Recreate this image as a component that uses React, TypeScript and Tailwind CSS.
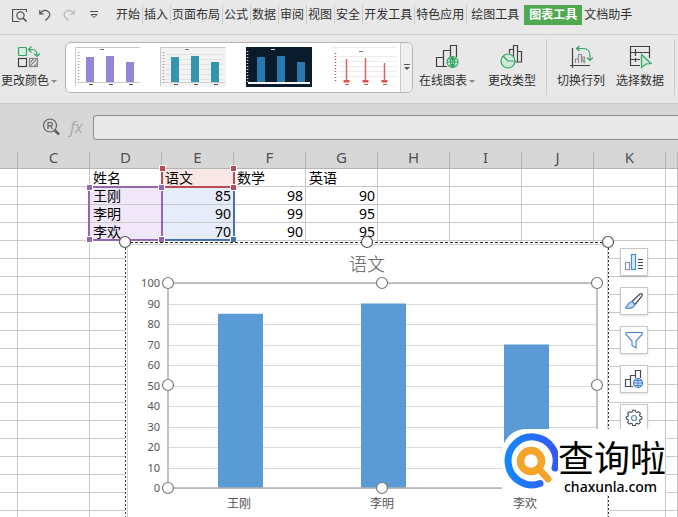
import React, { useState } from "react";

const tabs = ["开始", "插入", "页面布局", "公式", "数据", "审阅", "视图", "安全", "开发工具", "特色应用"];

const columns = ["C", "D", "E", "F", "G", "H", "I", "J", "K"];

const rows = [
    ["", "姓名", "语文", "数学", "英语"],
    ["", "王刚", "85", "98", "90"],
    ["", "李明", "90", "99", "95"],
    ["", "李欢", "70", "90", "95"],
];

const scores = [
    { name: "王刚", value: 85 },
    { name: "李明", value: 90 },
    { name: "李欢", value: 70 },
];

function PreviewIcon() {
    return (
        <svg className="w-[15px] h-[15px]" viewBox="0 0 15 15" fill="none" stroke="#505050" strokeWidth="1.2">
            <path d="M14.500 4V1.500H.5v12h7" />
            <circle cx="8.5" cy="7.5" r="3.6" />
            <path d="M11 10l3.5 3.5" strokeWidth="1.6" />
        </svg>
    );
}

function UndoIcon({ flip }: { flip?: boolean }) {
    return (
        <svg className={flip ? "w-3 h-3 -scale-x-100" : "w-3 h-3"} viewBox="0 0 12 12" fill="none" stroke={flip ? "#b8b8b8" : "#505050"} strokeWidth="1.2">
            <path d="M.8 1v4h4M1 5c2-3.2 5-4.2 7.8-2.8 2.6 1.5 2.6 4.6.7 6.3L6.5 11.5" />
        </svg>
    );
}

function Thumb({ bar, bg, label, dark }: { bar: string; bg: string; label: string; dark?: boolean }) {
    return (
        <svg className="w-[66px] h-10" viewBox="0 0 66 40" role="img" aria-label={label}>
            <rect width="66" height="40" fill={bg} />
            {!dark && <path d="M.5 39V.5h65" fill="none" stroke="#c8c8c8" />}
            {!dark && bg !== "#fff" && <path d="M5 7.5h58M5 12.5h58M5 17.5h58M5 22.5h58M5 27.5h58M5 32.5h58" stroke="#e2e2e2" />}
            <path d="M25 2.500h4" stroke={dark ? "#ddd" : "#777"} />
            <path d={dark ? "M1.5 4v32" : "M3.5 5v31"} stroke={dark ? "#ddd" : "#999"} strokeWidth="1.5" strokeDasharray="1 2" />
            <path d="M11 10h8V35h-8zM31 9h8V35h-8zM51 15h8V35h-8z" fill={bar} />
            <path d={dark ? "M2 36h62" : "M5 35.500h60"} stroke={dark ? "#f5f5f5" : "#ccc"} strokeWidth={dark ? 2 : 1} />
            {!dark && <path d="M14 37.500h4M34 37.500h4M54 37.500h4" stroke="#555" />}
        </svg>
    );
}

function LineThumb() {
    return (
        <svg className="w-[66px] h-10" viewBox="0 0 66 40" role="img" aria-label="样式 4">
            <path d="M0 .5h66M8 9.500h58M8 14.500h58M8 19.500h58M8 24.500h58M8 29.500h58" stroke="#ececec" />
            <path d="M28 4.500h4" stroke="#777" />
            <path d="M4.500 6v30" stroke="#a55" strokeWidth="1.500" strokeDasharray="1 2" />
            <path d="M15.500 12v22M34.500 11v23M53.500 16v18" stroke="#d9635f" strokeWidth="1.500" />
            <path d="M12.500 33h6v2.500h-6zM31.500 33h6v2.500h-6zM50.500 33h6v2.500h-6z" fill="#d9534f" />
            <path d="M14 37.500h4M33 37.500h4M52 37.500h4" stroke="#a66" />
        </svg>
    );
}

function RibbonButton({ label, arrow, children }: { label: string; arrow?: boolean; children: React.ReactNode }) {
    return (
        <button type="button" className="flex flex-col items-center gap-1 shrink-0">
            <svg className="w-6 h-6" viewBox="0 0 24 24" fill="none" stroke="#404040" strokeWidth="1.2">
                {children}
            </svg>
            <span className="flex items-center gap-0.5 text-xs leading-4">
                {label}
                {arrow && <span className="border-x-[3px] border-t-[3px] border-x-transparent border-t-[#888]" />}
            </span>
        </button>
    );
}

function Handle({ className }: { className: string }) {
    return <span className={"absolute w-[5px] h-[5px] outline outline-white " + className} />;
}

function ScoreChart() {
    const left = 43;
    const top = 41;
    const bottom = 246;
    const right = 472;
    const ticks = [0, 10, 20, 30, 40, 50, 60, 70, 80, 90, 100];
    const yOf = (v: number) => bottom - (v * (bottom - top)) / 100;
    const handles = [
        [left, top], [257, top], [right, top],
        [left, 143], [right, 143],
        [left, bottom], [257, bottom],
    ];

    return (
        <svg className="block w-[484px] h-[300px] overflow-visible" viewBox="0 0 484 300" role="img" aria-label="语文">
            <rect width="484" height="300" fill="#fff" />
            <path d="M2.500 300V2.500h480V300" fill="none" stroke="#cfcfcf" />
            <path d="M.5 300V0M483.500 300V0" stroke="#333" strokeDasharray="2 2" />
            <path d="M0 .5h484" stroke="#222" strokeDasharray="3 2" />
            <text x="242" y="29" textAnchor="middle" fontSize="18" fontWeight="300" fill="#595959">语文</text>
            {ticks.map((t) => (
                <g key={t}>
                    <path d={`M${left} ${Math.round(yOf(t)) + 0.5}H${right}`} stroke="#d9d9d9" />
                    <text x="35" y={Math.round(yOf(t)) + 4} textAnchor="end" fontSize="11" fill="#555">{t}</text>
                </g>
            ))}
            {scores.map((s, i) => (
                <g key={s.name}>
                    <rect x={93 + i * 143} y={yOf(s.value)} width="45" height={bottom - yOf(s.value)} fill="#5b9bd5" />
                    <text x={114 + i * 143} y="266" textAnchor="middle" fontSize="12" fill="#555">{s.name}</text>
                </g>
            ))}
            <rect x={left} y={top} width={right - left} height={bottom - top} fill="none" stroke="#b0b0b0" strokeWidth="1.500" />
            {handles.map(([x, y]) => (
                <circle key={`${x}-${y}`} cx={x} cy={y} r="5.500" fill="#fff" stroke="#7a7a7a" strokeWidth="1.200" />
            ))}
            {[0, 242, 483].map((x) => (
                <circle key={x} cx={x} cy="0" r="5.500" fill="#fff" stroke="#555" strokeWidth="1.200" />
            ))}
        </svg>
    );
}

function SideButton({ label, children }: { label: string; children: React.ReactNode }) {
    return (
        <button type="button" aria-label={label} className="flex items-center justify-center w-7 h-7 bg-white border border-[#c8c8c8] shadow">
            <svg className="w-5 h-5" viewBox="0 0 20 20" fill="none" stroke="#404a58" strokeWidth="1.2">
                {children}
            </svg>
        </button>
    );
}

function Watermark() {
    return (
        <div className="absolute left-[502px] top-[289px] flex w-[163px] h-[66px] bg-white rounded-tl-3xl">
            <svg className="w-14 h-[66px] shrink-0" viewBox="0 0 56 66" fill="none" strokeLinecap="round">
                <path d="M38 54.500A24 24 0 1 1 53 39" stroke="url(#ring)" strokeWidth="7" />
                <path d="M37 40l9 10" stroke="#f5a42a" strokeWidth="7" />
                <circle cx="29" cy="32" r="10.500" stroke="#f5a42a" strokeWidth="7.500" fill="#fff" />
                <defs>
                    <linearGradient id="ring" x1="0" x2="1">
                        <stop stopColor="#1486fb" />
                        <stop offset="1" stopColor="#3458f6" />
                    </linearGradient>
                </defs>
            </svg>
            <div className="flex flex-col text-black whitespace-nowrap pt-2.5">
                <span className="text-[36px] leading-10">查询啦</span>
                <span className="pl-1.5 text-sm leading-4 font-medium">chaxunla.com</span>
            </div>
        </div>
    );
}

function App() {
    const [formula, setFormula] = useState("");

    return (
        <div className="flex flex-col h-screen overflow-hidden bg-[#d7d7d7] text-[#303030] font-['Noto_Sans','Noto_Sans_CJK_SC',sans-serif]">
            <header className="flex items-center h-[35px] shrink-0 pl-3 pb-1 bg-[#e8e8e8] border-b border-[#d0d0d0]">
                <div className="flex items-center gap-3 pr-3">
                    <button type="button" aria-label="打印预览"><PreviewIcon /></button>
                    <button type="button" aria-label="撤销"><UndoIcon /></button>
                    <button type="button" aria-label="恢复"><UndoIcon flip /></button>
                    <button type="button" aria-label="更多">
                        <svg className="w-[14px] h-3" viewBox="0 0 14 12" fill="none" stroke="#505050">
                            <path d="M3 2.500h8M4 5.500l3 3 3-3z" />
                        </svg>
                    </button>
                </div>
                <nav className="flex items-center text-xs leading-5 whitespace-nowrap">
                    {tabs.map((tab, i) => (
                        <button type="button" key={tab} className={i === 0 ? "pl-[3px] pr-0.5" : "pl-px pr-0.5 border-l border-[#cccccc]"}>
                            {tab}
                        </button>
                    ))}
                    <button type="button" className="pl-1 pr-[5px] border-l border-[#cccccc]">绘图工具</button>
                    <button type="button" className="px-[5px] bg-[#50a850] text-white font-bold">图表工具</button>
                    <button type="button" className="px-0.5">文档助手</button>
                </nav>
            </header>

            <section className="flex items-center h-[69px] shrink-0 pl-px pb-1 bg-[#e8e8e8] border-b border-[#cacaca]">
                <RibbonButton label="更改颜色" arrow>
                    <rect x="1.500" y="2.500" width="8" height="8" rx="1" stroke="#35a566" fill="#d8eee0" />
                    <rect x="1.500" y="13.500" width="8" height="8" />
                    <rect x="12.500" y="13.500" width="8" height="8" stroke="#888" />
                    <path d="M12.500 18l4.500-4.500M12.500 21.500l8-8M17 21.500l3.500-3.500" stroke="#888" />
                    <path d="M14.500 1.500l-3 3 3 3M11.500 4.500h4c3 0 4.500 2 4.500 6M17 8.500l3 3 3-3" stroke="#35a566" />
                </RibbonButton>

                <div className="flex h-[51px] w-[348px] shrink-0 mx-2 mr-1.5 bg-white border border-[#b4b4b4] rounded-md overflow-hidden">
                    <div className="flex flex-1 items-center justify-between pl-[9px] pr-[3px]">
                        <button type="button"><Thumb bar="#9585d8" bg="#fff" label="样式 1" /></button>
                        <button type="button"><Thumb bar="#3595ae" bg="#f3f3f3" label="样式 2" /></button>
                        <button type="button"><Thumb bar="#2878ae" bg="#0a1c2c" label="样式 3" dark /></button>
                        <button type="button"><LineThumb /></button>
                    </div>
                    <button type="button" aria-label="更多样式" className="flex items-center justify-center w-3 bg-[#f0f0f0] border-l border-[#cccccc]">
                        <svg className="w-2 h-2" viewBox="0 0 8 8">
                            <path d="M1 1.500h6" stroke="#555" />
                            <path d="M1 4h6L4 7z" fill="#555" />
                        </svg>
                    </button>
                </div>

                <RibbonButton label="在线图表" arrow>
                    <path d="M12 21.500H1.500v-9h7M8.500 21.500v-16h7M15.500 12V.5h6V12" />
                    <circle cx="17.500" cy="17" r="5.500" fill="#d8eee0" stroke="#35a566" />
                    <path d="M12 17h11M17.500 11.500v11M13.500 13.500c2 1.500 6 1.500 8 0M13.500 20.500c2-1.500 6-1.500 8 0M17.500 11.500c-3 3-3 8 0 11M17.500 11.500c3 3 3 8 0 11" stroke="#35a566" />
                </RibbonButton>
                <div className="w-[13px] shrink-0" />
                <RibbonButton label="更改类型">
                    <path d="M9.500 8.500v-4h4V17M13.500 17V.5h4V17M17.500 6.500h4V17h-6" />
                    <circle cx="8" cy="16" r="7" fill="#cfe9da" stroke="#35a566" />
                    <path d="M8 16l-5-5M8 16h7" stroke="#35a566" />
                </RibbonButton>
                <div className="w-px h-14 shrink-0 mx-2.5 bg-[#cccccc]" />
                <RibbonButton label="切换行列">
                    <path d="M3.500 3v20M1 20.500h20" />
                    <path d="M6.500 18v-4h3v4M9.500 18V9.500h3V18M12.500 12h3v6z" stroke="#909090" />
                    <path d="M10.500 1l-3 2.500 3 2.500M8 3.500h6c4.500 0 7 3 7 7V15M18 12.500l3 3 3-3" stroke="#35a566" />
                </RibbonButton>
                <div className="w-[11px] shrink-0" />
                <RibbonButton label="选择数据">
                    <path d="M12 20.500H2.500v-19h19V13M2.500 7.500h19M2.500 14.500H12M7.500 4v7M7.500 13v4" />
                    <path d="M13.500 9.500l9.500 9-5 .5-4.500 3.500z" fill="#cfe9da" stroke="#35a566" />
                </RibbonButton>
                <div className="w-px h-14 shrink-0 ml-2.5 bg-[#cccccc]" />
            </section>

            <div className="flex items-center h-9 shrink-0 pl-[42px] pt-2.5">
                <button type="button" aria-label="查找">
                    <svg className="w-[18px] h-[18px]" viewBox="0 0 18 18" fill="none" stroke="#606060" strokeWidth="1.200">
                        <circle cx="8" cy="7.500" r="6.500" />
                        <path d="M6 11V4.500h2.500c2.500 0 2.500 3.300 0 3.300H6M8.500 8l2 3" />
                        <path d="M12.500 12l4.500 4.500" strokeWidth="2.500" />
                    </svg>
                </button>
                <label htmlFor="formula" className="w-[33px] pl-2.5 text-base leading-6 italic text-[#aaaaaa] font-['Open_Sans',sans-serif]">fx</label>
                <input
                    id="formula"
                    type="text"
                    value={formula}
                    onChange={(e) => setFormula(e.target.value)}
                    className="flex-1 min-w-0 h-[25px] px-2 text-sm bg-[#e8e8e8] border border-r-0 border-[#8c8c8c] rounded-l"
                />
            </div>

            <main className="relative flex-1 min-h-0 overflow-hidden bg-white">
                <table className="table-fixed w-full border-separate border-spacing-0">
                    <colgroup>
                        <col className="w-[18px]" />
                        {columns.map((c) => <col key={c} className="w-[72px]" />)}
                        <col />
                    </colgroup>
                    <thead className="bg-[#d7d7d7]">
                        <tr>
                            {["", ...columns, " "].map((c) => (
                                <th key={c} scope="col" className="h-[29px] p-0 pt-3 border-b border-[#b4b4b4] text-[15px] leading-4 font-normal text-[#505050]">
                                    <div className="h-4 border-r border-[#b4b4b4] flex items-center justify-center pb-1.5">{c}</div>
                                </th>
                            ))}
                        </tr>
                    </thead>
                    <tbody>
                        {Array.from({ length: 40 }, (_, r) => (
                            <tr key={r}>
                                {["", ...columns, " "].map((c, i) => {
                                    const text = rows[r]?.[i - 1] ?? "";
                                    const number = /^\d+$/.test(text);
                                    let fill = "";
                                    if (c === "E" && r === 0) fill = "bg-[#f9e7e6]";
                                    if (c === "D" && r > 0 && r < 4) fill = "bg-[#f0e7f8]";
                                    if (c === "E" && r > 0 && r < 4) fill = "bg-[#e6ecf9]";
                                    return (
                                        <td key={c} className={"h-[18px] py-0 pl-[3px] pr-0.5 border-r border-b border-[#c9c9c9] text-sm leading-[17px] text-black " + (number ? "text-right " : "") + fill}>
                                            {text}
                                        </td>
                                    );
                                })}
                            </tr>
                        ))}
                    </tbody>
                </table>

                <div className="absolute left-[161px] top-[29px] w-[74px] h-[19px] border-2 border-t-0 border-[#b94a56]">
                    <Handle className="-left-[3px] -top-[3px] bg-[#b94a56]" />
                    <Handle className="-right-[3px] -top-[3px] bg-[#b94a56]" />
                </div>
                <div className="absolute left-[161px] top-[46px] w-[74px] h-[55px] border-2 border-t-0 border-l-0 border-[#4a70b0]">
                    <Handle className="-right-[3px] -top-px bg-[#b94a56]" />
                    <Handle className="-right-[3px] -bottom-[3px] bg-[#4a70b0]" />
                </div>
                <div className="absolute left-[88px] top-[46px] w-[75px] h-[55px] border-2 border-[#9368b0]">
                    <Handle className="-left-[3px] -top-[3px] bg-[#9368b0]" />
                    <Handle className="-right-[3px] -top-[3px] bg-[#9368b0]" />
                    <Handle className="-left-[3px] -bottom-[3px] bg-[#9368b0]" />
                    <Handle className="-right-[3px] -bottom-[3px] bg-[#9368b0]" />
                </div>

                <div className="absolute left-[125px] top-[102px]">
                    <ScoreChart />
                </div>

                <div className="absolute left-[620px] top-[108px] flex flex-col gap-[11px]">
                    <SideButton label="图表元素">
                        <rect x="1.500" y="10.500" width="4" height="7" stroke="#8898b0" />
                        <rect x="7.500" y="2.500" width="4" height="15" stroke="#4a90c8" fill="#d8ecfa" />
                        <path d="M14 7.500h5M14 10.500h5M14 13.500h5M14 16.500h5" />
                    </SideButton>
                    <SideButton label="图表样式">
                        <path d="M8 10.500L16 3c1.500-1.200 3 .5 2 2l-7 8.500z" />
                        <path d="M8 10.500l3 3c-1.500 3.500-5 4.500-10 3.500 2.500-.5 2.500-6 7-6.500z" stroke="#4a88d8" fill="#c8dcf6" />
                    </SideButton>
                    <SideButton label="图表筛选器">
                        <path d="M2 2.500h16v2l-6 6.500v7l-4-2.500V11L2 4.500z" stroke="#4a88d8" />
                    </SideButton>
                    <SideButton label="在线图表">
                        <path d="M9 17.500H1.500v-7h5M6.500 17.500v-11h5M11.500 9V1.500h5V9" />
                        <circle cx="14" cy="14" r="4.500" fill="#cfe0f8" stroke="#3f78d0" />
                        <path d="M9.500 14h9M14 9.500v9M10.500 11.500h7M10.500 16.500h7" stroke="#3f78d0" strokeWidth=".9" />
                    </SideButton>
                    <SideButton label="设置">
                        <path transform="translate(1.200 0) scale(.88)" d="M8.500 2.500h3l.5 2 1.500.6 1.800-1 2 2-1 1.900.6 1.500 2 .5v2.500l-2 .5-.6 1.500 1 1.800-2 2-1.800-1-1.500.6-.5 2h-3l-.5-2-1.500-.6-1.800 1-2-2 1-1.800-.6-1.500-2-.5V10l2-.5.6-1.500-1-1.900 2-2 1.800 1 1.500-.6z" />
                        <circle cx="10" cy="10" r="2.500" stroke="#4a90c8" />
                    </SideButton>
                </div>

                <Watermark />
            </main>
        </div>
    );
}

export default App;
